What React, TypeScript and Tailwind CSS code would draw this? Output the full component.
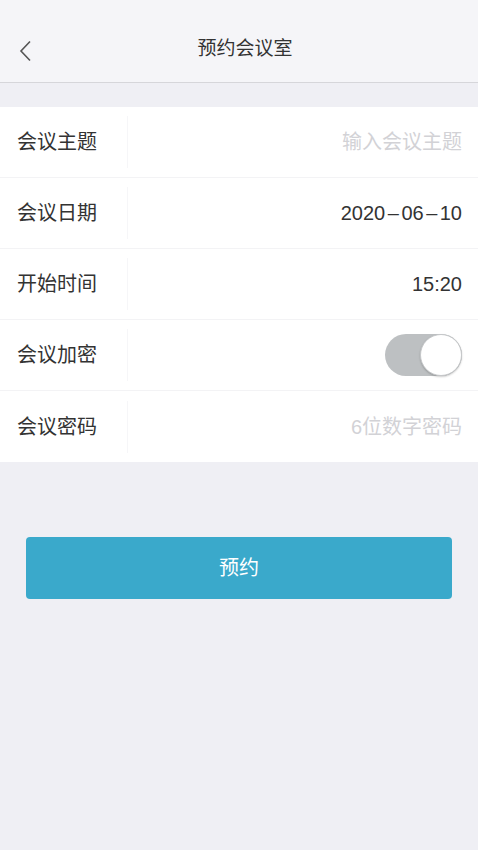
import React from 'react'

const font = {
  fontFamily: '"Liberation Sans", "Noto Sans CJK SC", "Noto Sans", sans-serif',
}

interface RowProps {
  label: string
  children: React.ReactNode
  last?: boolean
}

function Row(props: RowProps) {
  return (
    <div
      className={`flex h-[71px] items-center bg-white ${
        props.last ? '' : 'border-b border-[#f3f3f5]'
      }`}
    >
      <div className="flex h-[52px] w-[128px] items-center border-r border-[#f6f6f8] pl-[17px] text-[20px] text-[#333]">
        {props.label}
      </div>
      <div className="flex flex-1 items-center justify-end pr-[16px] text-[20px]">
        {props.children}
      </div>
    </div>
  )
}

export default function App() {
  return (
    <div className="min-h-[850px] w-full bg-[#efeff4]" style={font}>
      <div className="relative flex h-[83px] items-center justify-center border-b border-[#d6d6da] bg-[#f5f5f8]">
        <svg
          className="absolute left-[19px] top-[40px]"
          width="13"
          height="22"
          viewBox="0 0 13 22"
          fill="none"
        >
          <path d="M11 1.5 L2 11 L11 20.5" stroke="#555" strokeWidth="1.6" />
        </svg>
        <span className="ml-[12px] pt-[16px] text-[19px] text-[#333]">预约会议室</span>
      </div>
      <div className="mt-[24px]">
        <Row label="会议主题">
          <span className="text-[#d2d2d6]">输入会议主题</span>
        </Row>
        <Row label="会议日期">
          <span className="text-[#333]">
            2020<span className="mx-[2.5px]">–</span>06
            <span className="mx-[2.5px]">–</span>10
          </span>
        </Row>
        <Row label="开始时间">
          <span className="text-[#333]">15:20</span>
        </Row>
        <Row label="会议加密">
          <div className="flex h-[42px] w-[77px] items-center justify-end rounded-full bg-[#bdc0c2]">
            <div className="h-[42px] w-[42px] rounded-full border border-[#c6c8ca] bg-white shadow-[0_1px_2px_rgba(0,0,0,0.2)]" />
          </div>
        </Row>
        <Row label="会议密码" last>
          <span className="text-[#d2d2d6]">6位数字密码</span>
        </Row>
      </div>
      <div className="px-[26px] pt-[75px]">
        <button className="flex h-[62px] w-full items-center justify-center rounded-[4px] bg-[#3aa9cb] text-[20px] text-white">
          预约
        </button>
      </div>
    </div>
  )
}
